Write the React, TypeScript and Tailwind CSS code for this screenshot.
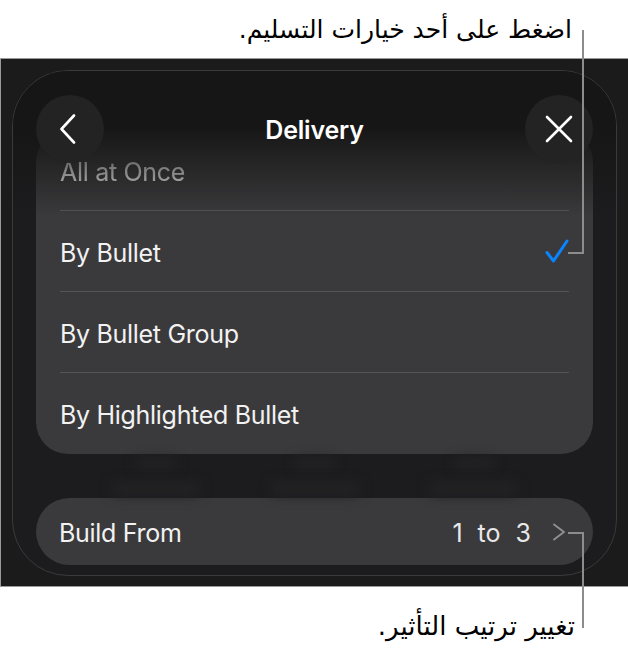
import React from 'react';

const options = [
  { label: 'All at Once', faded: true },
  { label: 'By Bullet', checked: true },
  { label: 'By Bullet Group' },
  { label: 'By Highlighted Bullet' },
];

function Check() {
  return (
    <svg width="24" height="24" viewBox="0 0 24 24" fill="none" className="shrink-0">
      <path d="M2 13.5 L8.5 22 L22 2" stroke="#0a84ff" strokeWidth="3" strokeLinecap="round" strokeLinejoin="round" />
    </svg>
  );
}

export default function App() {
  return (
    <div className="relative h-[649px] w-[628px] overflow-hidden bg-white font-['Inter',sans-serif]">
      {/* Top callout */}
      <div className="flex h-[58px] items-center justify-end pr-[56px]">
        <p dir="rtl" className="font-['DejaVu_Sans',sans-serif] text-[25px] leading-none text-black">
          اضغط على أحد خيارات التسليم.
        </p>
      </div>

      {/* Screenshot */}
      <div className="h-[529px] border-y border-l border-[#9a9a9a] bg-[#1b1b1c] px-[11px] pt-[11px]">
        <div className="relative h-[506px] overflow-hidden rounded-[56px] border border-[#3a3a3c] bg-[#1c1c1e] px-[23px] pt-[59px]">
          {/* List card */}
          <div className="rounded-[32px] bg-[#3a3a3c] px-[24px]">
            {options.map((o, i) => (
              <div
                key={o.label}
                className={`flex h-[81px] items-center justify-between ${i < options.length - 1 ? 'border-b border-[#545456]' : ''}`}
              >
                <span className={`mt-[5px] text-[25px] tracking-[-0.3px] text-[#f2f2f2] ${o.faded ? 'blur-[0.6px]' : ''}`}>
                  {o.label}
                </span>
                {o.checked && <Check />}
              </div>
            ))}
          </div>

          {/* Blurred content behind the sheet */}
          <div className="flex h-[44px] justify-around px-[40px] pt-[4px]">
            {[0, 1, 2].map((k) => (
              <div key={k} className="flex flex-col items-center gap-[14px]">
                <div className="h-[10px] w-[40px] rounded-full bg-[#232324] blur-[6px]" />
                <div className="h-[14px] w-[90px] rounded-full bg-[#222223] blur-[6px]" />
              </div>
            ))}
          </div>

          {/* Build From */}
          <div className="flex h-[67px] items-center justify-between rounded-full bg-[#3a3a3c] pl-[23px] pr-[27px]">
            <span className="mt-[5px] text-[25px] tracking-[-0.3px] text-[#f2f2f2]">Build From</span>
            <div className="flex items-center">
              <div className="mt-[5px] flex items-center gap-[15px] text-[25px] text-[#e8e8e8]">
                <span>1</span>
                <span>to</span>
                <span>3</span>
              </div>
              <svg width="14" height="18" viewBox="0 0 14 18" fill="none" className="ml-[21px]">
                <path d="M2 1.5 L12 9 L2 16.5" stroke="#8e8e93" strokeWidth="2" strokeLinecap="round" strokeLinejoin="round" />
              </svg>
            </div>
          </div>

          {/* Header over the scrolled list */}
          <div className="absolute inset-x-0 top-0 h-[145px] bg-gradient-to-b from-[#161616] from-[38%] to-[#16161600]">
            <div className="flex items-center justify-between px-[23px] pt-[24px]">
              <button type="button" className="flex h-[68px] w-[68px] items-center justify-center rounded-full bg-[#232323]">
                <svg width="18" height="30" viewBox="0 0 18 30" fill="none" className="-ml-[4px]">
                  <path d="M15 1.5 L2.5 15 L15 28.5" stroke="#ffffff" strokeWidth="2.6" strokeLinecap="round" strokeLinejoin="round" />
                </svg>
              </button>
              <h2 className="mt-[4px] text-[25px] font-semibold tracking-[-0.2px] text-white">Delivery</h2>
              <button type="button" className="flex h-[68px] w-[68px] items-center justify-center rounded-full bg-[#232323]">
                <svg width="30" height="30" viewBox="0 0 30 30" fill="none">
                  <path d="M3 3 L27 27 M27 3 L3 27" stroke="#ffffff" strokeWidth="2.6" strokeLinecap="round" />
                </svg>
              </button>
            </div>
          </div>
        </div>
      </div>

      {/* Bottom callout */}
      <div className="flex h-[62px] items-center justify-end pr-[53px] pt-[16px]">
        <p dir="rtl" className="font-['DejaVu_Sans',sans-serif] text-[26px] leading-none text-black">
          تغيير ترتيب التأثير.
        </p>
      </div>

      {/* Callout lines */}
      <div className="absolute left-[582px] top-[30px] h-[224px] w-[2px] bg-[#8c8c8c]" />
      <div className="absolute left-[568px] top-[252px] h-[2px] w-[16px] bg-[#8c8c8c]" />
      <div className="absolute left-[568px] top-[532px] h-[2px] w-[16px] bg-[#8c8c8c]" />
      <div className="absolute left-[582px] top-[532px] h-[96px] w-[2px] bg-[#8c8c8c]" />
    </div>
  );
}
